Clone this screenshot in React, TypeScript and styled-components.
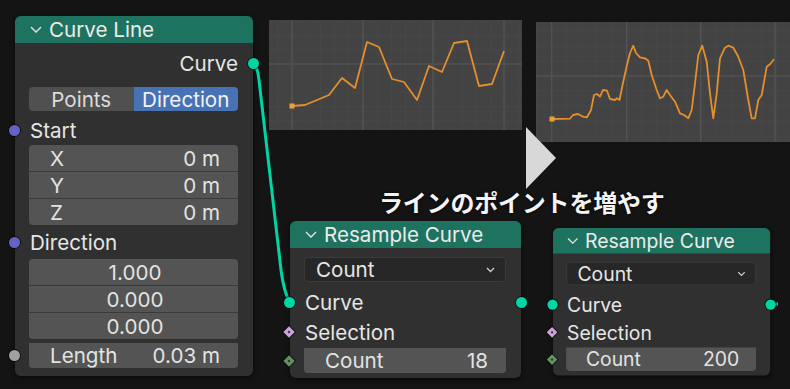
import styled, { createGlobalStyle } from 'styled-components';

const GlobalStyle = createGlobalStyle`
  body {
    margin: 0;
    background: #141414;
  }
`;

const StyledCanvas = styled.div`
  position: relative;
  width: 790px;
  height: 389px;
  overflow: hidden;
  background: #141414;
  font-family: Inter, 'Noto Sans', sans-serif;
  color: #e6e6e6;
`;

const StyledWires = styled.svg`
  position: absolute;
  left: 0;
  top: 0;
  width: 790px;
  height: 389px;
  pointer-events: none;
`;

const StyledNode = styled.div<{ $x: number; $y: number; $w: number; $scale?: number }>`
  position: absolute;
  left: ${({ $x }) => $x}px;
  top: ${({ $y }) => $y}px;
  width: ${({ $w }) => $w}px;
  background: #303030;
  border-radius: 6px;
  box-shadow: 0 2px 5px rgba(0, 0, 0, 0.55);
  transform: scale(${({ $scale }) => $scale ?? 1});
  transform-origin: 0 0;
`;

const StyledHeader = styled.div`
  height: 27px;
  display: flex;
  align-items: center;
  gap: 7px;
  padding-left: 15px;
  background: #1e7360;
  border-radius: 6px 6px 0 0;
  font-size: 20.6px;
  color: #ebebeb;
`;

const StyledBody = styled.div<{ $bottom: number }>`
  display: flex;
  flex-direction: column;
  padding: 0 15px ${({ $bottom }) => $bottom}px 14px;
`;

const StyledRow = styled.div<{ $top: number; $align?: string }>`
  position: relative;
  height: 26px;
  margin-top: ${({ $top }) => $top}px;
  display: flex;
  align-items: center;
  justify-content: ${({ $align }) => $align ?? 'flex-start'};
  padding-left: 1px;
  font-size: 20.6px;
`;

const StyledSocket = styled.span<{ $color: string; $side: 'left' | 'right' }>`
  position: absolute;
  top: 50%;
  ${({ $side }) => ($side === 'left' ? 'left: -20px;' : 'right: -21px;')}
  width: 11px;
  height: 11px;
  margin-top: -5.5px;
  border-radius: 50%;
  background: ${({ $color }) => $color};
  box-shadow: 0 0 0 1px rgba(0, 0, 0, 0.6);
`;

const StyledDiamond = styled.span<{ $color: string }>`
  position: absolute;
  top: 50%;
  left: -19px;
  width: 8px;
  height: 8px;
  margin-top: -4px;
  transform: rotate(45deg);
  background: ${({ $color }) => $color};
  box-shadow: 0 0 0 1px rgba(0, 0, 0, 0.6);

  &::after {
    content: '';
    position: absolute;
    left: 3px;
    top: 3px;
    width: 2px;
    height: 2px;
    background: #2a2a2a;
  }
`;

const StyledToggle = styled.div<{ $top: number }>`
  display: flex;
  height: 24px;
  margin-top: ${({ $top }) => $top}px;
  border-radius: 4px;
  overflow: hidden;
  font-size: 20.6px;
`;

const StyledToggleItem = styled.div<{ $active?: boolean }>`
  flex: 1;
  display: flex;
  align-items: center;
  justify-content: center;
  background: ${({ $active }) => ($active ? '#4772b3' : '#505050')};
  color: ${({ $active }) => ($active ? '#f2f2f2' : '#dcdcdc')};
`;

const StyledFieldGroup = styled.div<{ $top: number }>`
  position: relative;
  display: flex;
  flex-direction: column;
  gap: 1px;
  margin-top: ${({ $top }) => $top}px;
  background: #3a3a3a;
  border-radius: 4px;
`;

const StyledField = styled.div<{ $h: number; $center?: boolean }>`
  height: ${({ $h }) => $h}px;
  display: flex;
  align-items: center;
  justify-content: ${({ $center }) => ($center ? 'center' : 'space-between')};
  padding: 0 18px 0 21px;
  background: #545454;
  font-size: 20.6px;
  color: #e3e3e3;

  &:first-child {
    border-radius: 4px 4px 0 0;
  }
  &:last-child {
    border-radius: 0 0 4px 4px;
  }
  &:only-child {
    border-radius: 4px;
  }
`;

const StyledDropdown = styled.div<{ $top: number }>`
  height: 25px;
  margin-top: ${({ $top }) => $top}px;
  display: flex;
  align-items: center;
  justify-content: space-between;
  padding: 0 10px 0 11px;
  background: #272727;
  border: 1px solid #3a3a3a;
  border-radius: 4px;
  box-sizing: border-box;
  font-size: 20.6px;
`;

const StyledGraph = styled.svg<{ $x: number; $y: number }>`
  position: absolute;
  left: ${({ $x }) => $x}px;
  top: ${({ $y }) => $y}px;
`;

const StyledArrow = styled.div`
  position: absolute;
  left: 526px;
  top: 127px;
  width: 0;
  height: 0;
  border-top: 31px solid transparent;
  border-bottom: 31px solid transparent;
  border-left: 30px solid #d8d8d8;
`;

const StyledCaption = styled.div`
  position: absolute;
  left: 379px;
  top: 184px;
  font-family: 'Noto Sans CJK JP', sans-serif;
  font-weight: 700;
  font-size: 24px;
  letter-spacing: -0.2px;
  color: #f4f4f4;
  text-shadow: 0 0 3px #000;
  white-space: nowrap;
`;

const Chevron = ({ size = 12 }: { size?: number }) => (
  <svg width={size} height={size * 0.6} viewBox="0 0 12 7">
    <polyline points="1,1 6,6 11,1" fill="none" stroke="#e0e0e0" strokeWidth="1.4" />
  </svg>
);

const SmallChevron = () => (
  <svg width="9" height="6" viewBox="0 0 9 6">
    <polyline points="1,1 4.5,4.5 8,1" fill="none" stroke="#cfcfcf" strokeWidth="1.3" />
  </svg>
);

const TEAL = '#00d6a3';

type GraphProps = {
  x: number;
  y: number;
  w: number;
  h: number;
  vlines: number[];
  hline: number;
  points: number[][];
};

const Graph = ({ x, y, w, h, vlines, hline, points }: GraphProps) => {
  const step = (vlines[1] - vlines[0]) / 5;
  const minorV: number[] = [];
  for (let v = vlines[0] - step * 5; v < x + w; v += step) minorV.push(v);
  const minorH: number[] = [];
  for (let v = hline - step * 10; v < y + h; v += step) minorH.push(v);
  const d = points.map((p, i) => `${i ? 'L' : 'M'}${p[0]},${p[1]}`).join(' ');
  return (
    <StyledGraph $x={x} $y={y} width={w} height={h} viewBox={`${x} ${y} ${w} ${h}`}>
      <rect x={x} y={y} width={w} height={h} fill="#434343" />
      {minorV.map((v) => (
        <line key={`v${v}`} x1={v} x2={v} y1={y} y2={y + h} stroke="#484848" strokeWidth="1" />
      ))}
      {minorH.map((v) => (
        <line key={`h${v}`} x1={x} x2={x + w} y1={v} y2={v} stroke="#484848" strokeWidth="1" />
      ))}
      {vlines.map((v) => (
        <line key={`V${v}`} x1={v} x2={v} y1={y} y2={y + h} stroke="#525252" strokeWidth="1.5" />
      ))}
      <line x1={x} x2={x + w} y1={hline} y2={hline} stroke="#525252" strokeWidth="1.5" />
      <path d={d} fill="none" stroke="#e38f2e" strokeWidth="1.8" strokeLinejoin="round" />
      <rect x={points[0][0] - 2.5} y={points[0][1] - 2.5} width="5" height="5" fill="#f0a030" />
    </StyledGraph>
  );
};

const graphOne = [
  [292, 106], [305, 105], [317, 100], [329, 95], [342, 78], [355, 88], [367, 42],
  [379, 47], [392, 79], [404, 82], [417, 100], [429, 66], [442, 72], [454, 43],
  [467, 41], [479, 86], [492, 84], [504, 51],
];

const graphTwo = [
  [552, 119], [570, 118.7], [573, 115], [578, 114], [583, 116.7], [587, 117.3],
  [591, 110], [594, 95], [597, 94], [600, 96.7], [603, 90], [607, 90.7], [610, 99],
  [615, 100], [617, 98.3], [619.5, 100], [623, 83], [627, 65], [630, 53], [633.3, 45.7],
  [636, 53], [640, 57.3], [645, 58.3], [648.3, 60.7], [651.7, 75], [656.7, 90],
  [660, 98.3], [663.3, 96.7], [666.7, 90], [670, 95], [675, 101.7], [680, 113.3],
  [684, 115], [688.3, 118.3], [691.7, 110], [695, 83.3], [698.3, 55], [702.3, 45.7],
  [706.7, 61.7], [710, 93.3], [713.3, 118.3], [716.7, 93.3], [720, 58.3], [725, 47.7],
  [728.3, 45.7], [733.3, 47.7], [738.3, 56.7], [743.3, 70], [748.3, 100], [751.7, 118.3],
  [755, 118.3], [758.3, 100], [761.7, 95], [766.7, 66.7], [770, 64.3], [774, 59.3],
];

type ResampleProps = {
  x: number;
  y: number;
  count: number;
  scale?: number;
};

const ResampleNode = ({ x, y, count, scale }: ResampleProps) => (
  <StyledNode $x={x} $y={y} $w={231} $scale={scale}>
    <StyledHeader>
      <Chevron />
      Resample Curve
    </StyledHeader>
    <StyledBody $bottom={5}>
      <StyledDropdown $top={9}>
        Count
        <SmallChevron />
      </StyledDropdown>
      <StyledRow $top={7}>
        <StyledSocket $color={TEAL} $side="left" />
        Curve
        <StyledSocket $color={TEAL} $side="right" />
      </StyledRow>
      <StyledRow $top={4}>
        <StyledDiamond $color="#cfa3dc" />
        Selection
      </StyledRow>
      <StyledFieldGroup $top={3}>
        <StyledDiamond $color="#5f9460" />
        <StyledField $h={25}>
          <span>Count</span>
          <span>{count}</span>
        </StyledField>
      </StyledFieldGroup>
    </StyledBody>
  </StyledNode>
);

const CurveLineNode = () => (
  <StyledNode $x={15} $y={16} $w={238}>
    <StyledHeader>
      <Chevron />
      Curve Line
    </StyledHeader>
    <StyledBody $bottom={8}>
      <StyledRow $top={7} $align="flex-end">
        Curve
        <StyledSocket $color={TEAL} $side="right" />
      </StyledRow>
      <StyledToggle $top={11}>
        <StyledToggleItem>Points</StyledToggleItem>
        <StyledToggleItem $active>Direction</StyledToggleItem>
      </StyledToggle>
      <StyledRow $top={6}>
        <StyledSocket $color="#6363c7" $side="left" />
        Start
      </StyledRow>
      <StyledFieldGroup $top={2}>
        {['X', 'Y', 'Z'].map((axis) => (
          <StyledField key={axis} $h={26}>
            <span>{axis}</span>
            <span>0 m</span>
          </StyledField>
        ))}
      </StyledFieldGroup>
      <StyledRow $top={4}>
        <StyledSocket $color="#6363c7" $side="left" />
        Direction
      </StyledRow>
      <StyledFieldGroup $top={4}>
        {['1.000', '0.000', '0.000'].map((v, i) => (
          <StyledField key={i} $h={26} $center>
            {v}
          </StyledField>
        ))}
      </StyledFieldGroup>
      <StyledFieldGroup $top={4}>
        <StyledSocket $color="#a1a1a1" $side="left" />
        <StyledField $h={25}>
          <span>Length</span>
          <span>0.03 m</span>
        </StyledField>
      </StyledFieldGroup>
    </StyledBody>
  </StyledNode>
);

const App = () => (
  <StyledCanvas>
    <GlobalStyle />
    <StyledWires viewBox="0 0 790 389">
      <path
        d="M253,63 C258,67 258,74 259,80 L281,270 C283,285 286,296 290,302"
        fill="none"
        stroke={TEAL}
        strokeWidth="3"
      />
      <line x1="769" y1="304" x2="778" y2="304" stroke={TEAL} strokeWidth="3" />
    </StyledWires>
    <Graph x={269} y={20} w={253} h={110} vlines={[292, 363, 433, 504]} hline={64} points={graphOne} />
    <Graph x={536} y={22} w={254} h={120} vlines={[551.7, 626.7, 700.7, 775]} hline={76} points={graphTwo} />
    <StyledArrow />
    <StyledCaption>ラインのポイントを増やす</StyledCaption>
    <CurveLineNode />
    <ResampleNode x={290} y={221} count={18} />
    <ResampleNode x={553} y={228} count={200} scale={0.94} />
  </StyledCanvas>
);

export default App;
